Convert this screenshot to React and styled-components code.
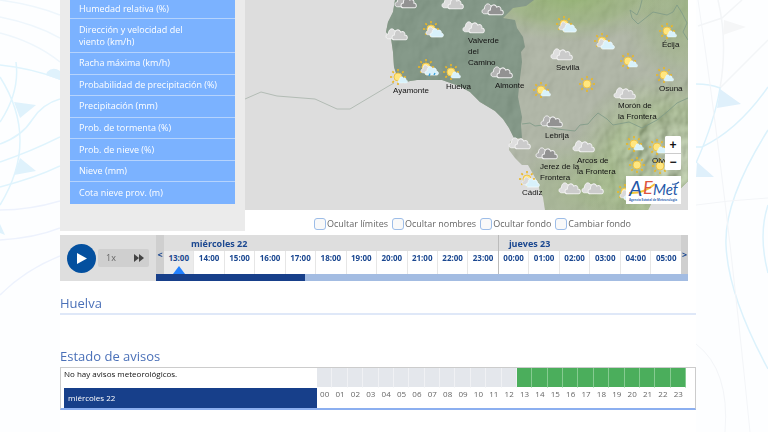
import React, { useState } from 'react';
import styled, { createGlobalStyle } from 'styled-components';

const GlobalStyle = createGlobalStyle`
  * {
    box-sizing: border-box;
  }

  body {
    margin: 0;
    background: #fdfeff;
    color: #666;
    font-family: 'Open Sans', 'Noto Sans', sans-serif;
    font-size: 9px;
    line-height: 12px;
    overflow-x: hidden;
  }

  button {
    border: 0;
    padding: 0;
    font: inherit;
    cursor: pointer;
  }
`;

const Page = styled.div`
  position: relative;
  min-height: 100vh;
  padding: 0 72px 0 60px;
  overflow: hidden;
`;

const Backdrop = styled.svg`
  position: absolute;
  top: 0;
  ${({ $side }) => $side}: 0;
  width: ${({ $wide }) => $wide}px;
  height: 432px;
`;

const Content = styled.main`
  position: relative;
  min-height: 100vh;
  background: #fff;
`;

const Forecast = styled.section`
  display: flex;
  margin-right: 8px;
`;

const Sidebar = styled.nav`
  flex: 0 0 185px;
  min-width: 0;
  height: 231px;
  padding: 0 10px;
  background: #ebebeb;
`;

const Variables = styled.ul`
  display: grid;
  grid-template-columns: minmax(0, 1fr);
  grid-template-rows: 19px 34px repeat(7, 1fr);
  height: 204px;
  margin: 0;
  padding: 0;
  list-style: none;
`;

const Variable = styled.li`
  display: flex;
  align-items: center;
  padding: 0 36px 0 9px;
  background: #7bb2ff;
  border-bottom: 1px solid #b5d3fd;
  white-space: ${({ $wrap }) => ($wrap ? 'normal' : 'nowrap')};

  &:last-child {
    border-bottom: 0;
  }

  a {
    color: #fff;
    text-decoration: none;
  }
`;

const MapColumn = styled.div`
  flex: 1;
  min-width: 0;
`;

const MapView = styled.div`
  position: relative;
  height: 210px;
  overflow: hidden;
  background: #dddddd;
`;

const MapDrawing = styled.svg`
  display: block;
  width: 100%;
  height: 100%;
`;

const Place = styled.span`
  position: absolute;
  left: ${({ $x }) => $x}px;
  top: ${({ $y }) => $y}px;
  color: #111;
  font-family: 'Liberation Sans', Arial, sans-serif;
  font-size: 8px;
  line-height: 11px;
  white-space: pre;
`;

const ZoomControl = styled.div`
  position: absolute;
  right: 7px;
  top: 136px;
  display: flex;
  flex-direction: column;
  width: 16px;
  border-radius: 2px;
  background: #fff;
  overflow: hidden;
`;

const ZoomButton = styled.button`
  height: 17px;
  background: #fff;
  color: #111;
  font-family: 'Liberation Sans', Arial, sans-serif;
  font-size: 12px;
  font-weight: bold;
  line-height: 16px;

  & + & {
    border-top: 1px solid #ccc;
  }
`;

const Logo = styled.svg`
  position: absolute;
  right: 7px;
  top: 176px;
  width: 55px;
  height: 28px;
  background: #fff;
`;

const Options = styled.div`
  display: flex;
  justify-content: center;
  gap: 4px;
  padding: 7px 0 0 12px;
`;

const Option = styled.label`
  display: flex;
  align-items: center;
  gap: 1px;
  height: 14px;
  white-space: nowrap;

  input {
    appearance: none;
    width: 12px;
    height: 12px;
    margin: 0;
    border: 1px solid #9dbde8;
    border-radius: 3px;
    background: #f9f9f9;
  }

  input:checked {
    background: #7bb2ff;
  }
`;

const Player = styled.section`
  display: flex;
  height: 46px;
  margin: 4px 8px 0 0;
  background: #dedede;
`;

const Controls = styled.div`
  display: flex;
  flex: 0 0 96px;
  align-items: center;
  gap: 2px;
  padding-left: 7px;
`;

const PlayButton = styled.button`
  display: grid;
  place-items: center;
  width: 29px;
  height: 29px;
  border-radius: 50%;
  background: #04509f;
`;

const Speed = styled.div`
  display: flex;
  align-items: center;
  justify-content: space-between;
  width: 51px;
  height: 18px;
  padding: 0 5px 0 8px;
  border-radius: 2px;
  background: #cfcfcf;

  button {
    display: flex;
    background: none;
  }
`;

const Timeline = styled.div`
  display: flex;
  flex: 1;
  flex-direction: column;
  min-width: 0;
`;

const Track = styled.div`
  display: flex;
  height: 39px;
`;

const Step = styled.button`
  flex: 0 0 ${({ $wide }) => $wide}px;
  background: #cfcfcf;
  color: #1a4790;
  font-weight: bold;
  line-height: 39px;
`;

const Day = styled.div`
  display: flex;
  flex: ${({ $hours }) => $hours} 1 0;
  flex-direction: column;
  min-width: 0;

  & + & {
    border-left: 1px solid #bbb;
  }
`;

const DayName = styled.div`
  height: 16px;
  padding-left: ${({ $indent }) => $indent}px;
  color: #1a4790;
  font-weight: bold;
  line-height: 18px;
`;

const Hours = styled.div`
  display: flex;
  flex: 1;
`;

const Hour = styled.button`
  position: relative;
  display: flex;
  flex: 1 1 0;
  justify-content: center;
  min-width: 0;
  padding-top: 1px;
  background: ${({ $current }) => ($current ? '#ebebeb' : '#fff')};
  color: #1a4790;
  font-size: 8px;
  font-weight: bold;

  & + & {
    border-left: 1px solid #e6e6e6;
  }
`;

const Marker = styled.span`
  position: absolute;
  bottom: 0;
  border: 6px solid transparent;
  border-top: 0;
  border-bottom: 8px solid #2180ff;
`;

const Progress = styled.div`
  height: 7px;
  background: #a3bce2;
`;

const Loaded = styled.div`
  width: 28%;
  height: 100%;
  background: #173f8a;
`;

const Heading = styled.h2`
  margin: 0;
  color: #4a70b8;
  font-size: 13px;
  font-weight: normal;
  line-height: 18px;
`;

const Town = styled(Heading)`
  margin: 13px 0 32px;
  padding-bottom: 1px;
  border-bottom: 2px solid #dfe8f8;
`;

const Warnings = styled.table`
  width: 100%;
  border: 1px solid #ccc;
  border-bottom: 2px solid #8caff0;
  border-collapse: separate;
  border-spacing: 0;
  table-layout: fixed;
  margin-top: 2px;
  padding: 0 9px 0 3px;
  font-size: 8px;

  td,
  th {
    padding: 0;
    font-weight: normal;
  }
`;

const NameColumn = styled.col`
  width: 253px;
`;

const Notice = styled.td`
  height: 20px;
  color: #111;
  text-align: left;
  vertical-align: top;
`;

const Level = styled.td`
  background: ${({ $active }) => ($active ? '#4bae5c' : '#e4e7ec')};
  border-right: 1px solid ${({ $active }) => ($active ? '#86cb91' : '#f0f1f4')};
  border-bottom: 1px solid #fff;
`;

const WarningDay = styled.th`
  height: 19px;
  color: #fff;
  background: #173f8a;
  text-align: left;
  text-indent: 4px;
  line-height: 20px;
`;

const WarningHour = styled.td`
  text-align: center;
  vertical-align: top;
`;

const variables = [
  'Humedad relativa (%)',
  'Dirección y velocidad del viento (km/h)',
  'Racha máxima (km/h)',
  'Probabilidad de precipitación (%)',
  'Precipitación (mm)',
  'Prob. de tormenta (%)',
  'Prob. de nieve (%)',
  'Nieve (mm)',
  'Cota nieve prov. (m)',
];

const options = ['Ocultar límites', 'Ocultar nombres', 'Ocultar fondo', 'Cambiar fondo'];

const days = [
  { name: 'miércoles 22', indent: 27, first: 13, count: 11 },
  { name: 'jueves 23', indent: 10, first: 0, count: 6 },
];

const places = [
  ['Ayamonte', 148, 85],
  ['Huelva', 201, 81],
  ['Valverde\ndel\nCamino', 223, 35],
  ['Almonte', 250, 80],
  ['Sevilla', 311, 62],
  ['Écija', 417, 39],
  ['Osuna', 414, 83],
  ['Morón de\nla Frontera', 373, 100],
  ['Lebrija', 300, 130],
  ['Jerez de la\nFrontera', 295, 161],
  ['Arcos de\nla Frontera', 332, 155],
  ['Cádiz', 277, 187],
  ['Olvera', 407, 155],
];

const skies = [
  ['dark', 161, 2],
  ['cloud', 208, 3],
  ['dark', 248, 9],
  ['cloud', 152, 34],
  ['mixed', 188, 30],
  ['cloud', 229, 27],
  ['fair', 153, 77],
  ['rain', 183, 68],
  ['fair', 206, 72],
  ['dark', 257, 72],
  ['mixed', 321, 25],
  ['mixed', 359, 42],
  ['cloud', 317, 54],
  ['fair', 383, 61],
  ['fair', 296, 90],
  ['sun', 342, 84],
  ['fair', 422, 31],
  ['fair', 419, 75],
  ['cloud', 380, 93],
  ['dark', 307, 121],
  ['cloud', 275, 143],
  ['dark', 302, 153],
  ['cloud', 339, 146],
  ['mixed', 284, 180],
  ['cloud', 325, 188],
  ['cloud', 348, 188],
  ['fair', 389, 144],
  ['fair', 412, 147],
  ['sun', 392, 165],
  ['sun', 415, 166],
  ['mixed', 382, 193],
];

const pad = n => String(n).padStart(2, '0');

const CLOUD = 'M-7 5C-11 5-11 0-7 0C-7-6-1-7 1-3C4-5 7-2 6 0C10 0 10 5 7 5Z';

function Sun({ x = 0, y = 0, r = 4 }) {
  return (
    <g transform={`translate(${x} ${y})`}>
      {[0, 45, 90, 135, 180, 225, 270, 315].map(a => (
        <path key={a} d={`M0 ${-r - 1.8}V${-r - 4}`} stroke="#e9b727" strokeWidth="1.6" transform={`rotate(${a})`} />
      ))}
      <circle r={r} fill="#ffe680" stroke="#f0c445" strokeWidth="1" />
    </g>
  );
}

function Sky({ kind, x, y }) {
  const front = kind === 'dark' ? '#929292' : '#cbcbcb';

  return (
    <g transform={`translate(${x} ${y})`}>
      {(kind === 'cloud' || kind === 'dark') && (
        <>
          <path d={CLOUD} fill={kind === 'dark' ? '#b4b4b4' : '#dedede'} stroke="#f5f5f5" strokeWidth="1" transform="translate(-3 0) scale(.8 .95)" />
          <path d={CLOUD} fill={front} stroke="#f0f0f0" strokeWidth="1.2" transform="translate(3 1) scale(.8 .95)" />
        </>
      )}
      {kind === 'sun' && <Sun />}
      {kind === 'fair' && (
        <>
          <Sun />
          <path d={CLOUD} fill="#d8f2fb" stroke="#f4fcff" strokeWidth=".8" transform="translate(5 3) scale(.5 .6)" />
        </>
      )}
      {(kind === 'mixed' || kind === 'rain') && (
        <>
          <Sun x={-2} y={-1} />
          <path d={CLOUD} fill="#d9d9d9" stroke="#f5f5f5" strokeWidth="1" transform="translate(-1 1) scale(.6 .75)" />
          <path d={CLOUD} fill="#d8f1fb" stroke="#f4fcff" strokeWidth="1" transform="translate(4 3) scale(.7 .8)" />
        </>
      )}
      {kind === 'rain' && <path d="M2 5.5L1 8M7 5L6 7" stroke="#39a2dc" strokeWidth="1.4" />}
    </g>
  );
}

const LAND =
  'M150 0L148 12L143 22L141 32L146 38L148 52L149 67L153 79L158 83L165 81L172 80L197 80L214 86L225 92L235 102L250 111L258 119L264 128L269 138L265 142L264 150L270 158L277 165L283 165L287 172L293 183L295 192L298 197L300 210H403L407 202L436 188L443 181V0Z';
const HUELVA =
  'M150 0L148 12L143 22L141 32L146 38L148 52L149 67L153 79L158 83L165 81L172 80L197 80L214 86L225 92L235 102L250 111L258 119L264 128L269 138H277L276 125L277 117L275 107L273 97L275 78L277 62L276 52L280 47L278 37L272 28L270 20L258 18L268 8L281 6L289 0Z';

function Terrain() {
  return (
    <>
      <defs>
        <clipPath id="land">
          <path d={LAND} />
        </clipPath>
        <radialGradient id="hills">
          <stop offset="0" stopColor="#80b04c" />
          <stop offset=".6" stopColor="#8fb266" stopOpacity=".75" />
          <stop offset="1" stopColor="#9fb384" stopOpacity="0" />
        </radialGradient>
        <filter id="relief" x="0" y="0" width="100%" height="100%">
          <feTurbulence type="fractalNoise" baseFrequency=".05 .035" numOctaves="3" seed="8" />
          <feDiffuseLighting surfaceScale="3" lightingColor="#fff">
            <feDistantLight azimuth="225" elevation="33" />
          </feDiffuseLighting>
        </filter>
        <radialGradient id="relief-fade">
          <stop offset="0" stopColor="#fff" stopOpacity=".8" />
          <stop offset="1" stopColor="#fff" stopOpacity="0" />
        </radialGradient>
        <mask id="relief-mask">
          <rect x="141" width="302" height="210" fill="#1c1c1c" />
          <ellipse cx="425" cy="160" rx="90" ry="90" fill="url(#relief-fade)" />
        </mask>
      </defs>
      <path d={LAND} fill="#adb4a3" />
      <g clipPath="url(#land)">
        <ellipse cx="325" cy="-6" rx="110" ry="48" fill="url(#hills)" opacity=".65" />
        <ellipse cx="445" cy="10" rx="70" ry="80" fill="url(#hills)" opacity=".4" />
        <ellipse cx="425" cy="165" rx="100" ry="95" fill="url(#hills)" />
        <ellipse cx="335" cy="190" rx="70" ry="55" fill="url(#hills)" opacity=".3" />
      </g>
      <path d={HUELVA} fill="#7c9280" />
      <g clipPath="url(#land)">
        <g mask="url(#relief-mask)" style={{ mixBlendMode: 'soft-light' }}>
          <rect x="141" width="302" height="210" filter="url(#relief)" />
        </g>
      </g>
      <g fill="none" stroke="#7e9986" strokeWidth=".8">
        <path d="M0 99L16 92L32 96L70 99L92 109H105L142 87L149 83" stroke="#b3bcb5" strokeWidth="1" />
        <path d="M277 124L285 123L290 126L298 125L312 129L330 131L335 125L343 124L348 118L353 113L362 119L368 125L384 122L397 128L412 120L422 112L432 103L443 98" />
        <path d="M443 40L438 32L442 23L437 13L432 5L428 12L422 15L408 12L398 20L393 24L387 18L385 10L392 15L395 8L397 0" />
      </g>
    </>
  );
}

function MapPanel() {
  return (
    <MapView>
      <MapDrawing viewBox="0 0 443 210" preserveAspectRatio="xMinYMin slice">
        <Terrain />
        {skies.map(([kind, x, y]) => (
          <Sky key={`${x}-${y}`} kind={kind} x={x} y={y} />
        ))}
      </MapDrawing>
      {places.map(([name, x, y]) => (
        <Place key={name} $x={x} $y={y}>
          {name}
        </Place>
      ))}
      <ZoomControl>
        <ZoomButton aria-label="Acercar">+</ZoomButton>
        <ZoomButton aria-label="Alejar">−</ZoomButton>
      </ZoomControl>
      <Logo viewBox="0 0 55 28">
        <path d="M3 17Q17 18 29 8" fill="none" stroke="#f6c63a" strokeWidth="2" />
        <g fontFamily="Lato, sans-serif" fontStyle="italic" fill="#2458a8">
          <text x="3" y="20" fontSize="21">A</text>
          <text x="17" y="18" fontSize="18" fill="#dd5540">E</text>
          <text x="27" y="19" fontSize="15">Met</text>
        </g>
        <path d="M46 8Q50 9 53 6" fill="none" stroke="#2458a8" strokeWidth="1.2" />
        <text x="3" y="25" fontFamily="Open Sans, sans-serif" fontSize="3" fontWeight="bold" fill="#3b6cb5">
          Agencia Estatal de Meteorología
        </text>
      </Logo>
    </MapView>
  );
}

function TimePlayer() {
  const [current, setCurrent] = useState('0-0');

  return (
    <Player>
      <Controls>
        <PlayButton aria-label="Reproducir">
          <svg width="11" height="11" viewBox="0 0 11 11">
            <path d="M1 0L11 5.5L1 11Z" fill="#fff" />
          </svg>
        </PlayButton>
        <Speed>
          <span>1x</span>
          <button aria-label="Más rápido">
            <svg width="10" height="8" viewBox="0 0 10 8">
              <path d="M0 0L5 4L0 8ZM5 0L10 4L5 8Z" fill="#444" />
            </svg>
          </button>
        </Speed>
      </Controls>
      <Timeline>
        <Track>
          <Step $wide={8}>&lt;</Step>
          {days.map((day, d) => (
            <Day key={day.name} $hours={day.count}>
              <DayName $indent={day.indent}>{day.name}</DayName>
              <Hours>
                {Array.from({ length: day.count }, (_, i) => (
                  <Hour key={i} $current={current === `${d}-${i}`} onClick={() => setCurrent(`${d}-${i}`)}>
                    {pad(day.first + i)}:00
                    {current === `${d}-${i}` && <Marker />}
                  </Hour>
                ))}
              </Hours>
            </Day>
          ))}
          <Step $wide={7}>&gt;</Step>
        </Track>
        <Progress>
          <Loaded />
        </Progress>
      </Timeline>
    </Player>
  );
}

function WarningTable() {
  const hours = Array.from({ length: 24 }, (_, i) => i);

  return (
    <Warnings>
      <colgroup>
        <NameColumn />
      </colgroup>
      <tbody>
        <tr>
          <Notice>No hay avisos meteorológicos.</Notice>
          {hours.map(h => (
            <Level key={h} $active={h > 12} />
          ))}
        </tr>
        <tr>
          <WarningDay scope="row">miércoles 22</WarningDay>
          {hours.map(h => (
            <WarningHour key={h}>{pad(h)}</WarningHour>
          ))}
        </tr>
      </tbody>
    </Warnings>
  );
}

export default function App() {
  return (
    <>
      <GlobalStyle />
      <Page>
        <Backdrop $side="left" $wide={60} viewBox="0 0 60 432" fill="none" stroke="#dff4fd" strokeWidth="1.5">
          <path d="M0 0Q35 5 60 15M0 17Q35 24 60 38M0 33Q35 42 60 62" stroke="#eef6fc" />
          <path d="M0 65Q30 68 60 79M0 77Q40 140 0 205M16 62Q20 92 0 122" />
          <path d="M0 144Q22 136 32 120T60 99M0 162Q30 152 60 137M0 187Q35 178 60 166" />
          <path d="M0 210Q30 210 60 201M0 240Q35 238 60 228M0 295Q25 270 60 256" stroke="#edf2fd" />
          <path d="M47 72Q53 66 60 71V80L46 75ZM14 102L36 105L20 118ZM20 158L36 171L14 175ZM0 224L5 235L0 233Z" fill="#dff2fc" stroke="none" />
        </Backdrop>
        <Backdrop $side="right" $wide={80} viewBox="688 0 80 432" fill="none" stroke="#dcf2fc" strokeWidth="1.5">
          <path d="M698 26L722 18L742 0M718 0Q728 42 720 88L768 40" stroke="#f3f5f7" />
          <path d="M696 84Q710 84 720 88Q715 120 696 163M696 147H702Q738 130 768 87" />
          <path d="M768 130Q724 200 726 245Q728 295 768 369M768 205Q758 235 768 273" />
          <path d="M688 206Q730 200 768 198M696 344Q730 370 725 432M698 0Q725 180 750 432" stroke="#f3f5f8" strokeWidth="1" />
          <path d="M720 89L741 104L717 108ZM697 162L714 177H696Z" fill="#dff0fb" stroke="none" />
          <path d="M724 20L746 27L723 35Z" fill="#f5f6f7" stroke="none" />
        </Backdrop>
        <Content>
          <Forecast>
            <Sidebar>
              <Variables>
                {variables.map((name, i) => (
                  <Variable key={name} $wrap={i === 1}>
                    <a href="#mapa">{name}</a>
                  </Variable>
                ))}
              </Variables>
            </Sidebar>
            <MapColumn id="mapa">
              <MapPanel />
              <Options>
                {options.map(name => (
                  <Option key={name}>
                    <input type="checkbox" />
                    {name}
                  </Option>
                ))}
              </Options>
            </MapColumn>
          </Forecast>
          <TimePlayer />
          <Town>Huelva</Town>
          <Heading>Estado de avisos</Heading>
          <WarningTable />
        </Content>
      </Page>
    </>
  );
}
